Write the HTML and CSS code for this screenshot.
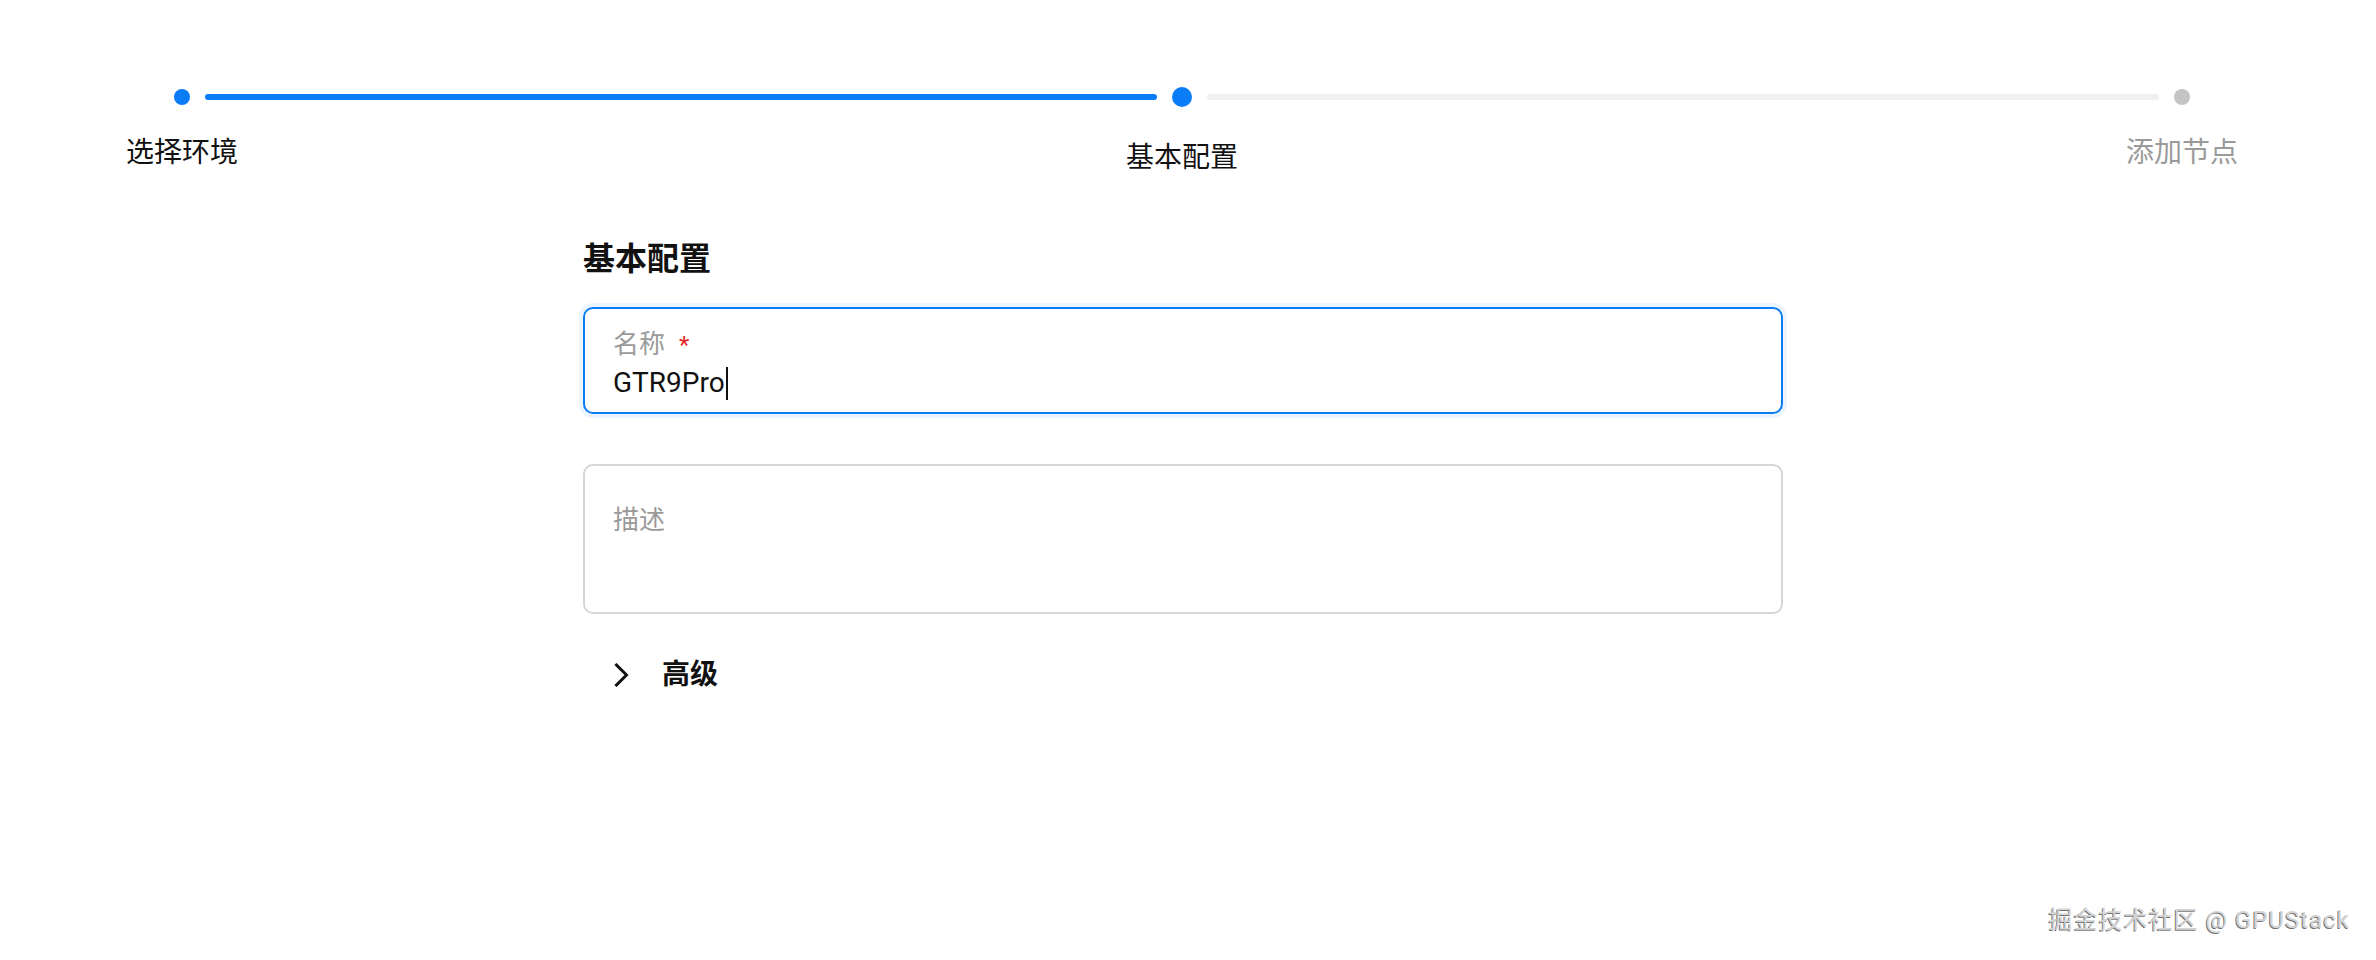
FILE: index.html
```html
<!DOCTYPE html>
<html lang="zh-CN">
<head>
<meta charset="utf-8">
<link rel="stylesheet" href="styles.css">
</head>
<body>
<div class="page">
  <div class="steps">
    <div class="track">
      <span class="dot dot-done"></span>
      <span class="tail tail-done"></span>
      <span class="dot dot-active"></span>
      <span class="tail tail-wait"></span>
      <span class="dot dot-wait"></span>
    </div>
    <div class="labels">
      <div class="label label-done">选择环境</div>
      <div class="label label-active">基本配置</div>
      <div class="label label-wait">添加节点</div>
    </div>
  </div>

  <div class="form">
    <h2 class="form-title">基本配置</h2>
    <div class="field field-focus">
      <div class="field-label">名称<span class="req">*</span></div>
      <div class="field-value">GTR9Pro<span class="caret"></span></div>
    </div>
    <div class="field field-area">
      <div class="field-label">描述</div>
    </div>
    <div class="advanced">
      <svg class="chev" width="16" height="24" viewBox="0 0 16 24"><path d="M2.5 2 L12.5 12 L2.5 22" fill="none" stroke="#111" stroke-width="3" stroke-linecap="square" stroke-linejoin="miter"/></svg>
      <span class="adv-text">高级</span>
    </div>
  </div>

  <div class="watermark">掘金技术社区 @ GPUStack</div>
</div>
</body>
</html>
```

FILE: styles.css
```css
* { box-sizing: border-box; }
html, body { margin: 0; padding: 0; background: #fff; }
body {
  font-family: Roboto, "Noto Sans CJK SC", sans-serif;
  color: #000;
  width: 2376px;
  height: 960px;
  overflow: hidden;
}
.page {
  position: relative;
  width: 2366px;
  height: 960px;
}

/* steps */
.steps { padding-top: 87px; }
.track {
  display: flex;
  align-items: center;
  height: 20px;
  margin: 0 176px 0 174px;
  gap: 15px;
}
.dot { display: block; border-radius: 50%; flex: none; }
.dot-done { width: 16px; height: 16px; background: #0a7cf5; }
.dot-active { width: 20px; height: 20px; background: #0a7cf5; }
.dot-wait { width: 16px; height: 16px; background: #c4c4c4; }
.tail { display: block; flex: 1; height: 6px; border-radius: 3px; }
.tail-done { background: #0a7cf5; }
.tail-wait { background: #f0f0f0; }

.labels {
  display: flex;
  justify-content: space-between;
  align-items: flex-start;
  margin: 26px 84px 0 82px;
}
.label {
  width: 200px;
  text-align: center;
  font-size: 28px;
  line-height: 40px;
}
.label-done { color: #111; }
.label-active { color: #111; margin-top: 5px; }
.label-wait { color: #9a9a9a; }

/* form */
.form {
  width: 1200px;
  margin: 0 auto;
  padding-top: 59px;
}
.form-title {
  margin: 0;
  font-size: 32px;
  line-height: 44px;
  font-weight: 700;
  color: #111;
}
.field {
  margin-top: 26px;
  border: 2px solid #d6d6d6;
  border-radius: 10px;
  padding: 17px 28px 10px;
}
.field-focus {
  border-color: #0a7cf5;
  box-shadow: 0 0 0 4px rgba(10, 124, 245, 0.08);
  height: 107px;
}
.field-label {
  font-size: 26px;
  line-height: 36px;
  color: #9a9a9a;
}
.req {
  color: #e5251f;
  margin-left: 14px;
  font-size: 24px;
}
.field-value {
  font-size: 28px;
  line-height: 40px;
  color: #111;
  display: flex;
  align-items: center;
}
.caret {
  display: inline-block;
  width: 2px;
  height: 33px;
  background: #111;
  margin-left: 1px;
}
.field-area {
  margin-top: 50px;
  height: 150px;
  padding-top: 36px;
}
.advanced {
  display: flex;
  align-items: center;
  gap: 32px;
  margin-top: 41px;
  padding-left: 31px;
  height: 40px;
}
.chev { display: block; flex: none; }
.adv-text {
  font-size: 28px;
  line-height: 40px;
  font-weight: 700;
  color: #111;
}

/* watermark overlay */
.watermark {
  position: absolute;
  right: 16px;
  bottom: 24px;
  font-size: 24px;
  line-height: 32px;
  letter-spacing: 1px;
  color: #d4d4d4;
  text-shadow: -1px 1px 0 rgba(70, 70, 70, 0.75);
}
```
